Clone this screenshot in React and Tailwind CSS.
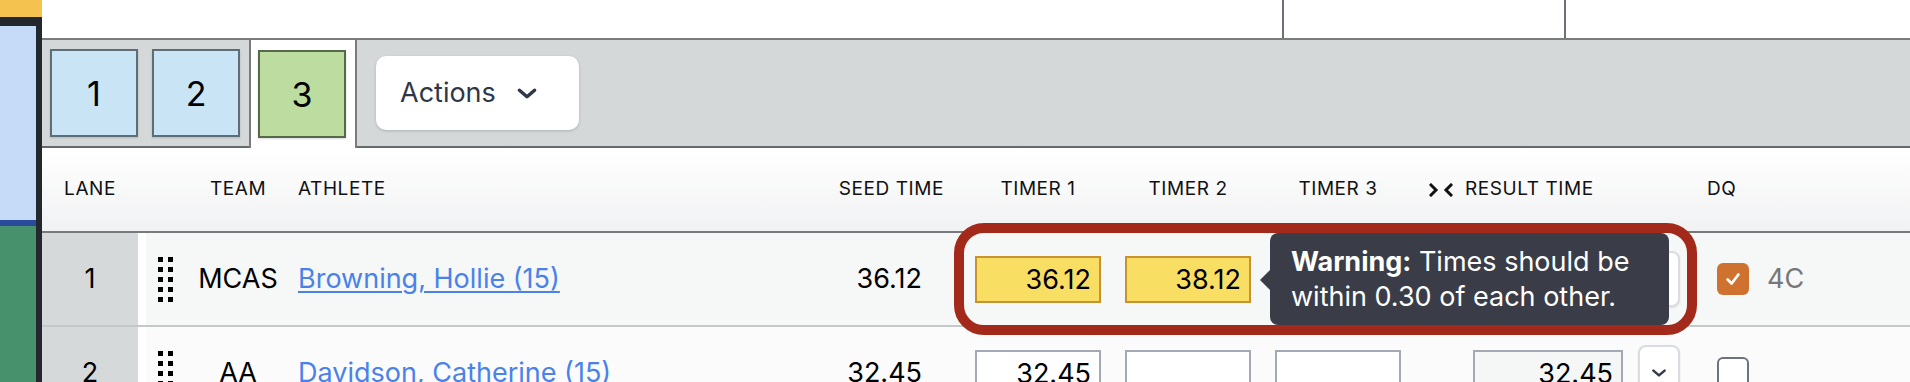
import React from 'react';

const rows = [
  { lane: 1, team: 'MCAS', athlete: 'Browning, Hollie (15)', seed: '36.12', t1: '36.12', t2: '38.12', t3: '', result: '', warn: true, dq: true, code: '4C' },
  { lane: 2, team: 'AA', athlete: 'Davidson, Catherine (15)', seed: '32.45', t1: '32.45', t2: '', t3: '', result: '32.45', warn: false, dq: false, code: '' },
];

function Chevron({ className }) {
  return (
    <svg viewBox="0 0 20 12" className={className} fill="none" stroke="currentColor" strokeWidth="3.2" strokeLinecap="round" strokeLinejoin="round">
      <polyline points="3,3 10,9 17,3" />
    </svg>
  );
}

function DragHandle() {
  return (
    <div className="grid grid-cols-2 gap-[5px] w-[15px]">
      {Array.from({ length: 10 }).map((_, i) => (
        <span key={i} className="block w-[5px] h-[5px] bg-black" />
      ))}
    </div>
  );
}

function TimeInput({ value, warn }) {
  return (
    <input
      readOnly
      value={value}
      className={`w-[126px] h-[47px] border-2 px-[8px] text-right text-[27px] text-black outline-none ${
        warn ? 'bg-[#f8df64] border-[#c8922e]' : 'bg-white border-[#a3aab6]'
      }`}
    />
  );
}

function Tab({ label, active }) {
  return (
    <div
      className={`w-[88px] h-[88px] flex items-center justify-center text-[34px] text-black border-2 shadow-[0_1px_2px_rgba(0,0,0,0.15)] ${
        active ? 'bg-[#bcdd9f] border-[#56694a]' : 'bg-[#c9e4f5] border-[#5e6e78]'
      }`}
    >
      {label}
    </div>
  );
}

export default function App() {
  return (
    <div className="flex w-[1910px] h-[382px] overflow-hidden bg-white font-[Inter,sans-serif] text-black">
      {/* Side rail */}
      <aside className="w-[42px] shrink-0 flex flex-col">
        <div className="h-[17px] bg-[#f3c24f]" />
        <div className="flex-1 flex">
          <div className="flex-1 flex flex-col border-t-[9px] border-[#23272e]">
            <div className="h-[194px] bg-[#c6dbf7]" />
            <div className="h-[6px] bg-[#2b4a9e]" />
            <div className="flex-1 bg-[#47916c]" />
          </div>
          <div className="w-[6px] bg-[#23272e]" />
        </div>
      </aside>

      <main className="relative flex-1 flex flex-col">
        {/* Top strip */}
        <div className="flex h-[38px] shrink-0">
          <div className="w-[1240px]" />
          <div className="w-[284px] border-x-2 border-[#6b6f78]" />
        </div>

        {/* Heat tabs */}
        <div className="flex h-[110px] shrink-0 border-t-2 border-[#7b7b7b]">
          <div className="w-[207px] flex items-center gap-[14px] pl-[8px] bg-[#d4d8d9] border-b-2 border-[#666a6d]">
            <Tab label="1" />
            <Tab label="2" />
          </div>
          <div className="w-[108px] flex items-center pl-[7px] bg-white border-x-2 border-[#7b7b7b]">
            <Tab label="3" active />
          </div>
          <div className="flex-1 flex items-center pl-[19px] bg-[#d4d8d9] border-b-2 border-[#666a6d]">
            <button className="w-[203px] h-[74px] flex items-center gap-[20px] pl-[24px] bg-white rounded-[10px] shadow-[0_1px_3px_rgba(0,0,0,0.18)] text-[27px] text-[#2f3747]">
              <span>Actions</span>
              <Chevron className="w-[22px] h-[13px]" />
            </button>
          </div>
        </div>

        {/* Column headers */}
        <div className="flex h-[85px] shrink-0 items-center border-b-2 border-[#777a7c] bg-gradient-to-b from-white to-[#f1f2f3] text-[19px] tracking-[0.03em] text-[#111]">
          <div className="w-[96px] text-center">LANE</div>
          <div className="w-[48px]" />
          <div className="w-[104px] text-center">TEAM</div>
          <div className="w-[540px] pl-[8px]">ATHLETE</div>
          <div className="w-[133px] text-right pr-[19px]">SEED TIME</div>
          <div className="w-[150px] text-center">TIMER 1</div>
          <div className="w-[150px] text-center">TIMER 2</div>
          <div className="w-[150px] text-center">TIMER 3</div>
          <div className="w-[277px] flex items-center gap-[12px] pl-[16px]">
            <svg viewBox="0 0 24 14" className="w-[24px] h-[14px]" fill="none" stroke="currentColor" strokeWidth="3" strokeLinecap="square">
              <polyline points="2,2 7,7 2,12" />
              <polyline points="22,2 17,7 22,12" />
            </svg>
            <span>RESULT TIME</span>
          </div>
          <div className="flex-1 pl-[17px]">DQ</div>
        </div>

        {/* Entries */}
        {rows.map((r) => (
          <div
            key={r.lane}
            className={`flex h-[94px] shrink-0 border-b-2 border-[#c5c8ca] ${r.lane === 1 ? 'bg-[#f6f7f7]' : 'bg-[#fbfbfb]'}`}
          >
            <div className="w-[96px] flex items-center justify-center bg-[#d5d9da] text-[27px]">{r.lane}</div>
            <div className="w-[8px] bg-white" />
            <div className="w-[40px] flex items-center pl-[12px]">
              <DragHandle />
            </div>
            <div className="w-[104px] flex items-center justify-center text-[27px]">{r.team}</div>
            <div className="w-[540px] flex items-center pl-[8px]">
              <a href="#" className="text-[27px] text-[#4a82ea] underline underline-offset-[3px] decoration-[1.5px]">
                {r.athlete}
              </a>
            </div>
            <div className="w-[133px] flex items-center justify-end pr-[41px] text-[27px]">{r.seed}</div>
            <div className="w-[150px] flex items-center justify-center">
              <TimeInput value={r.t1} warn={r.warn} />
            </div>
            <div className="w-[150px] flex items-center justify-center">
              <TimeInput value={r.t2} warn={r.warn} />
            </div>
            <div className="w-[150px] flex items-center justify-center">
              <TimeInput value={r.t3} />
            </div>
            <div className="w-[277px] flex items-center pl-[60px] gap-[15px]">
              <input
                readOnly
                value={r.result}
                className="w-[150px] h-[47px] border-2 border-[#a3aab6] bg-[#f5f6f6] px-[8px] text-right text-[27px] text-black outline-none"
              />
              <button className="w-[42px] h-[56px] flex items-center justify-center bg-white rounded-[8px] border-2 border-[#d9dce0] shadow-[0_1px_2px_rgba(0,0,0,0.1)] text-[#363c4a]">
                <Chevron className="w-[16px] h-[10px]" />
              </button>
            </div>
            <div className="flex-1 flex items-center gap-[18px] pl-[27px]">
              {r.dq ? (
                <span className="w-[32px] h-[32px] flex items-center justify-center rounded-[6px] bg-[#d0722f]">
                  <svg viewBox="0 0 20 20" className="w-[18px] h-[18px]" fill="none" stroke="white" strokeWidth="3" strokeLinecap="round" strokeLinejoin="round">
                    <polyline points="4,10.5 8.5,15 16,5" />
                  </svg>
                </span>
              ) : (
                <span className="w-[32px] h-[32px] rounded-[6px] border-2 border-[#6b7280] bg-white" />
              )}
              <span className="text-[27px] text-[#777]">{r.code}</span>
            </div>
          </div>
        ))}

        {/* Annotation frame */}
        <div className="absolute left-[912px] top-[223px] w-[743px] h-[112px] rounded-[30px] border-[10px] border-[#a3291a] pointer-events-none" />

        {/* Warning tooltip */}
        <div className="absolute left-[1228px] top-[233px] w-[399px] h-[92px] flex flex-col justify-center pl-[21px] rounded-[8px] bg-[#3a3d47] text-white text-[27px] leading-[35px]">
          <span className="absolute left-[-10px] top-[37px] w-0 h-0 border-y-[10px] border-y-transparent border-r-[10px] border-r-[#3a3d47]" />
          <p>
            <strong className="font-bold">Warning:</strong> Times should be
          </p>
          <p>within 0.30 of each other.</p>
        </div>
      </main>
    </div>
  );
}
